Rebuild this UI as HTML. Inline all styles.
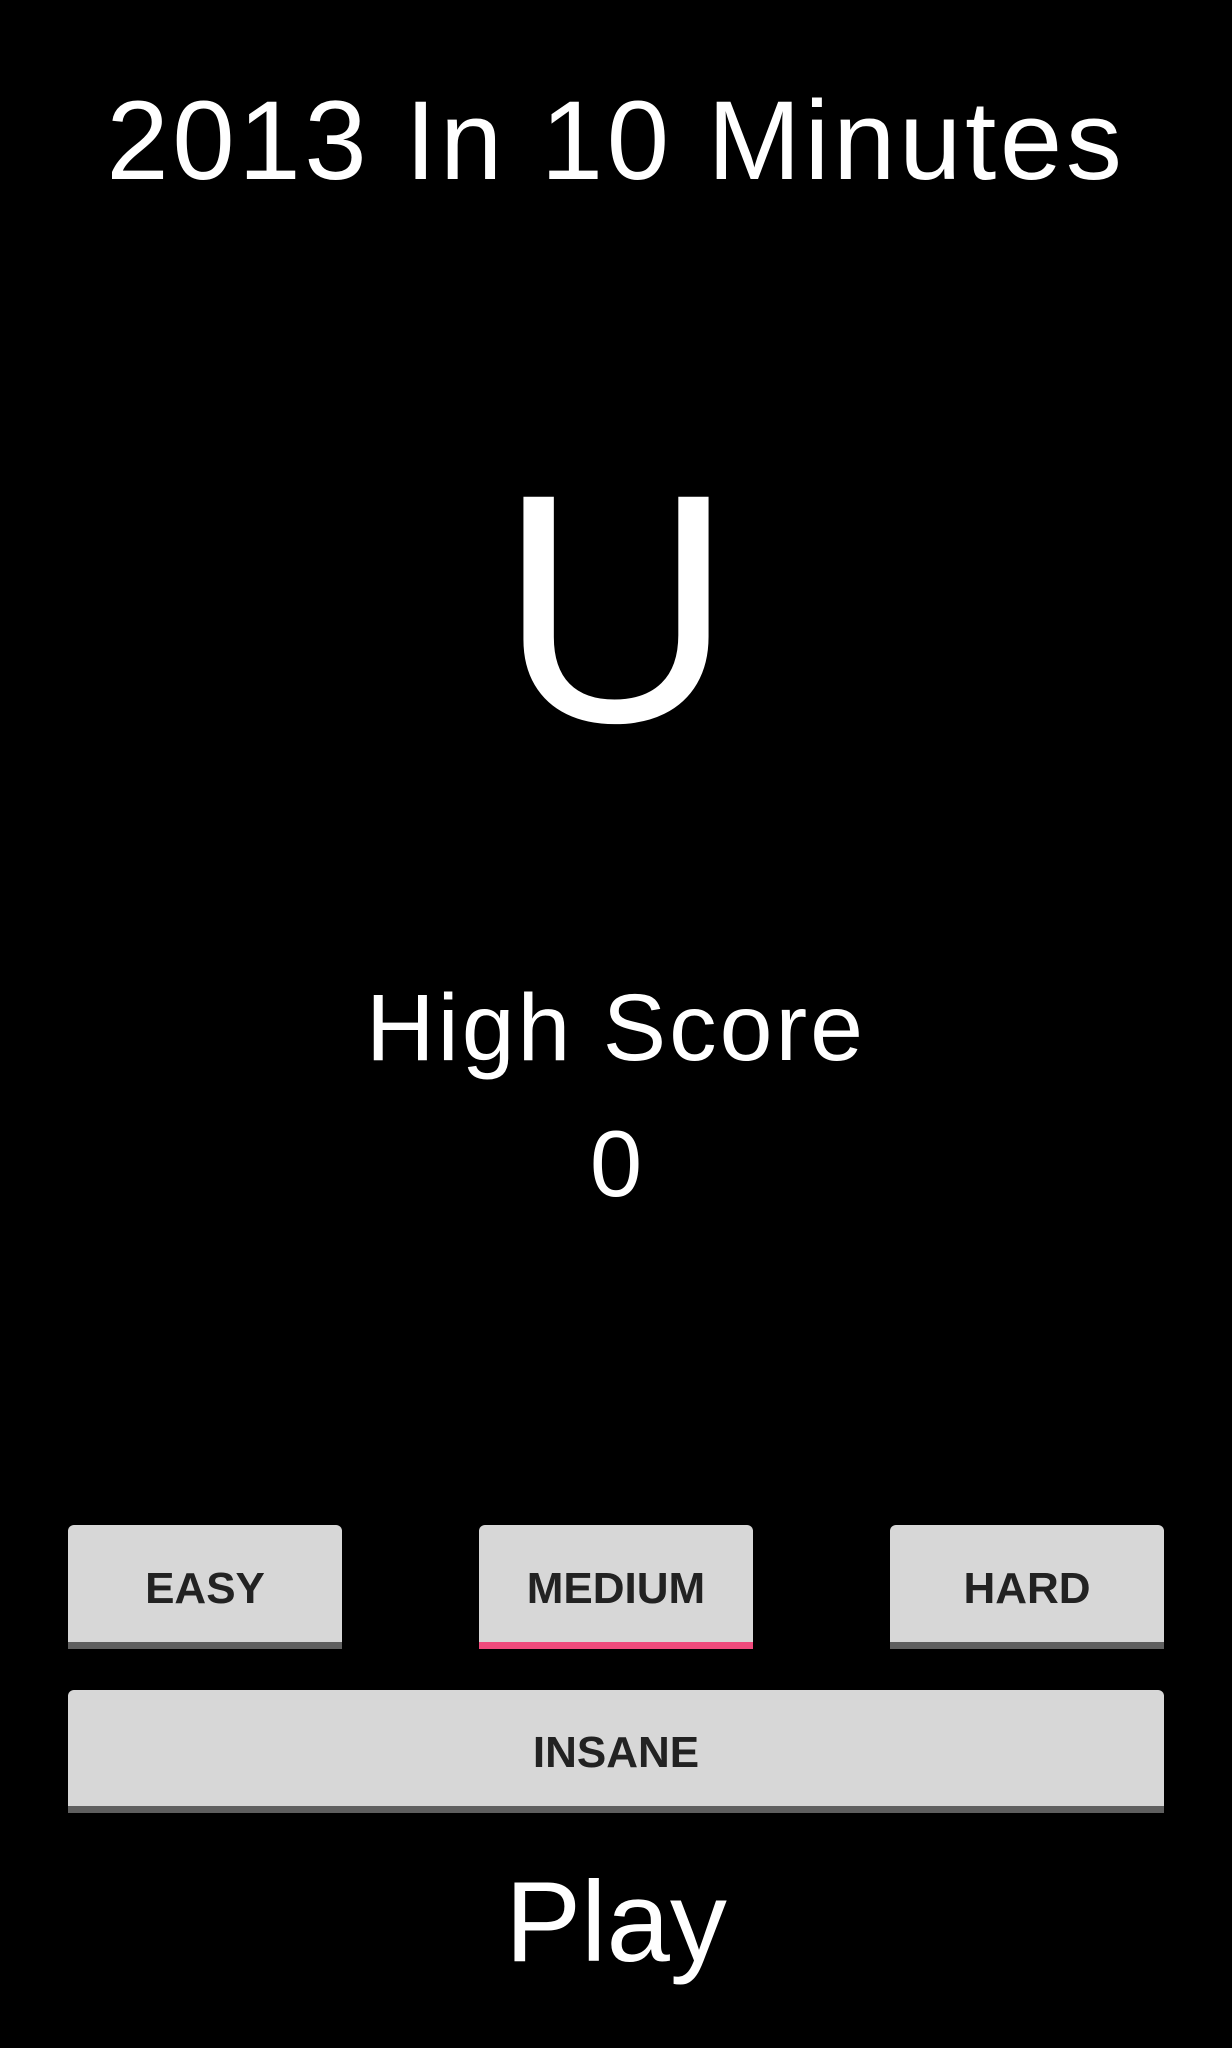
<!DOCTYPE html>
<html><head><meta charset="utf-8"><style>
html,body{margin:0;padding:0;background:#000;}
body{width:1232px;height:2048px;position:relative;overflow:hidden;font-family:"Liberation Sans",sans-serif;color:#fff;}
.t{position:absolute;left:0;width:1232px;text-align:center;white-space:nowrap;}
.btn{position:absolute;background:#d7d7d7;border-radius:6px 6px 0 0;box-sizing:border-box;}
.btn .lab{position:absolute;left:0;right:0;top:10px;bottom:7px;display:flex;align-items:center;justify-content:center;font-weight:bold;font-size:44px;color:#222;}
.btn .bar{position:absolute;left:0;right:0;bottom:0;height:7px;background:#5f5f5f;}
</style></head><body>
<div class="t" style="top:85px;font-size:112px;line-height:112px;letter-spacing:3.7px;">2013 In 10 Minutes</div>
<div class="t" style="top:446px;font-size:326px;line-height:326px;">U</div>
<div class="t" style="top:981px;font-size:95px;line-height:95px;letter-spacing:3px;">High Score</div>
<div class="t" style="top:1117px;font-size:94px;line-height:94px;">0</div>

<div class="btn" style="left:68px;top:1525px;width:274px;height:124px;"><div class="lab">EASY</div><div class="bar"></div></div>
<div class="btn" style="left:479px;top:1525px;width:274px;height:124px;"><div class="lab">MEDIUM</div><div class="bar" style="background:#ef4a7c;"></div></div>
<div class="btn" style="left:890px;top:1525px;width:274px;height:124px;"><div class="lab">HARD</div><div class="bar"></div></div>
<div class="btn" style="left:68px;top:1690px;width:1096px;height:123px;"><div class="lab">INSANE</div><div class="bar"></div></div>

<div class="t" style="top:1866px;font-size:114px;line-height:114px;">Play</div>
</body></html>
